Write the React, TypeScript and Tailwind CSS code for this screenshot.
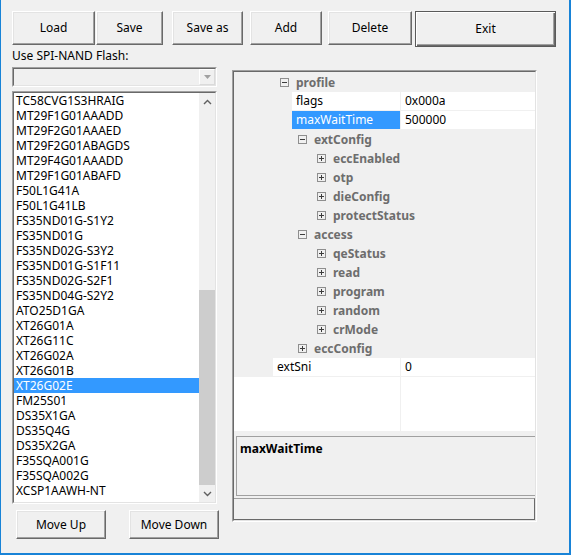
import React from 'react';

const CHIPS = [
  'TC58CVG1S3HRAIG',
  'MT29F1G01AAADD',
  'MT29F2G01AAAED',
  'MT29F2G01ABAGDS',
  'MT29F4G01AAADD',
  'MT29F1G01ABAFD',
  'F50L1G41A',
  'F50L1G41LB',
  'FS35ND01G-S1Y2',
  'FS35ND01G',
  'FS35ND02G-S3Y2',
  'FS35ND01G-S1F11',
  'FS35ND02G-S2F1',
  'FS35ND04G-S2Y2',
  'ATO25D1GA',
  'XT26G01A',
  'XT26G11C',
  'XT26G02A',
  'XT26G01B',
  'XT26G02E',
  'FM25S01',
  'DS35X1GA',
  'DS35Q4G',
  'DS35X2GA',
  'F35SQA001G',
  'F35SQA002G',
  'XCSP1AAWH-NT',
];

const SELECTED_CHIP = 'XT26G02E';

type GridRow =
  | { kind: 'cat'; label: string; open: boolean; indent: string }
  | { kind: 'prop'; name: string; value: string; spacer: string; selected?: boolean };

// indent / spacer classes written out in full so tailwind picks them up
const ROWS: GridRow[] = [
  { kind: 'cat', label: 'profile', open: true, indent: 'pl-[46px]' },
  { kind: 'prop', name: 'flags', value: '0x000a', spacer: 'w-[58px]' },
  { kind: 'prop', name: 'maxWaitTime', value: '500000', spacer: 'w-[58px]', selected: true },
  { kind: 'cat', label: 'extConfig', open: true, indent: 'pl-[64px]' },
  { kind: 'cat', label: 'eccEnabled', open: false, indent: 'pl-[83px]' },
  { kind: 'cat', label: 'otp', open: false, indent: 'pl-[83px]' },
  { kind: 'cat', label: 'dieConfig', open: false, indent: 'pl-[83px]' },
  { kind: 'cat', label: 'protectStatus', open: false, indent: 'pl-[83px]' },
  { kind: 'cat', label: 'access', open: true, indent: 'pl-[64px]' },
  { kind: 'cat', label: 'qeStatus', open: false, indent: 'pl-[83px]' },
  { kind: 'cat', label: 'read', open: false, indent: 'pl-[83px]' },
  { kind: 'cat', label: 'program', open: false, indent: 'pl-[83px]' },
  { kind: 'cat', label: 'random', open: false, indent: 'pl-[83px]' },
  { kind: 'cat', label: 'crMode', open: false, indent: 'pl-[83px]' },
  { kind: 'cat', label: 'eccConfig', open: false, indent: 'pl-[64px]' },
  { kind: 'prop', name: 'extSni', value: '0', spacer: 'w-[39px]' },
];

function WinButton({
  label,
  className = '',
  isDefault = false,
}: {
  label: string;
  className?: string;
  isDefault?: boolean;
}) {
  return (
    <button
      className={`flex shrink-0 items-center justify-center bg-[#f0f0f0] text-[12px] text-black ${
        isDefault
          ? 'border border-[#5a5a5a] shadow-[inset_1px_1px_0_#ffffff,inset_-1px_-1px_0_#696969,inset_-2px_-2px_0_#a0a0a0]'
          : 'border border-t-white border-l-white border-r-[#696969] border-b-[#696969] shadow-[inset_-1px_-1px_0_#a0a0a0,inset_1px_1px_0_#e3e3e3]'
      } ${className}`}
    >
      {label}
    </button>
  );
}

function Toggle({ open }: { open: boolean }) {
  return (
    <svg width="9" height="9" viewBox="0 0 9 9" className="shrink-0">
      <rect x="0.5" y="0.5" width="8" height="8" fill="none" stroke="#8e8e8e" />
      <line x1="2" y1="4.5" x2="7" y2="4.5" stroke="#3c3c3c" />
      {!open && <line x1="4.5" y1="2" x2="4.5" y2="7" stroke="#3c3c3c" />}
    </svg>
  );
}

function Chevron({ up }: { up: boolean }) {
  return (
    <svg width="9" height="6" viewBox="0 0 9 6">
      <path
        d={up ? 'M1 5 L4.5 1.5 L8 5' : 'M1 1 L4.5 4.5 L8 1'}
        fill="none"
        stroke="#606060"
        strokeWidth="1.4"
      />
    </svg>
  );
}

function ChipList() {
  return (
    <div className="mt-[4px] h-[413px] w-[205px] border border-t-[#a0a0a0] border-l-[#a0a0a0] border-r-white border-b-white">
      <div className="flex h-full border border-t-[#696969] border-l-[#696969] border-r-[#e3e3e3] border-b-[#e3e3e3] bg-white">
        <div className="flex-1 overflow-hidden">
          {CHIPS.map((c) => (
            <div
              key={c}
              className={`h-[15px] pl-[2px] text-[12px] leading-[15px] ${
                c === SELECTED_CHIP ? 'bg-[#3399ff] text-white' : 'text-black'
              }`}
            >
              {c}
            </div>
          ))}
        </div>
        {/* scrollbar */}
        <div className="flex w-[16px] flex-col bg-[#f0f0f0]">
          <div className="flex h-[17px] items-center justify-center">
            <Chevron up />
          </div>
          <div className="h-[180px]" />
          <div className="flex-1 bg-[#cdcdcd]" />
          <div className="flex h-[17px] items-center justify-center">
            <Chevron up={false} />
          </div>
        </div>
      </div>
    </div>
  );
}

function PropertyGrid() {
  return (
    <div className="ml-[15px] mt-[23px] h-[452px] w-[305px] border border-t-[#a0a0a0] border-l-[#a0a0a0] border-r-white border-b-white">
      <div className="flex h-full flex-col border border-t-[#696969] border-l-[#696969] border-r-[#e3e3e3] border-b-[#e3e3e3] bg-[#f0f0f0]">
        <div className="h-[1px]" />
        {ROWS.map((r) =>
          r.kind === 'cat' ? (
            <div key={r.label} className={`flex h-[19px] items-center ${r.indent}`}>
              <Toggle open={r.open} />
              <span className="ml-[7px] text-[12px] font-bold leading-[19px] text-[#6d6d6d]">
                {r.label}
              </span>
            </div>
          ) : (
            <div key={r.name} className="flex h-[19px] items-start">
              <div className={`h-[19px] shrink-0 ${r.spacer}`} />
              <div
                className={`h-[18px] flex-1 pl-[4px] text-[12px] leading-[18px] ${
                  r.selected ? 'bg-[#3399ff] text-white' : 'bg-white text-black'
                }`}
              >
                {r.name}
              </div>
              <div className="ml-[1px] h-[18px] w-[134px] shrink-0 bg-white pl-[4px] text-[12px] leading-[18px] text-black">
                {r.value}
              </div>
            </div>
          ),
        )}
        {/* empty rows area */}
        <div className="flex h-[54px] items-stretch">
          <div className="flex-1 bg-white" />
          <div className="ml-[1px] w-[134px] bg-white" />
        </div>
        {/* description */}
        <div className="h-[5px]" />
        <div className="ml-[2px] h-[60px] border border-r-0 border-[#a0a0a0] pl-[3px] pt-[4px] text-[12px] font-bold leading-[15px] text-black">
          maxWaitTime
        </div>
        <div className="h-[2px]" />
        <div className="h-[22px] border-t border-r border-b border-t-[#a0a0a0] border-r-[#696969] border-b-[#696969]" />
      </div>
    </div>
  );
}

export default function App() {
  return (
    <div className="h-[555px] w-[571px] overflow-hidden border-b-2 border-l border-r-2 border-[#1883d7] bg-[#f0f0f0] font-['Noto_Sans',sans-serif] text-black">
      {/* toolbar */}
      <div className="flex items-start pl-[11px] pt-[11px]">
        <WinButton label="Load" className="h-[34px] w-[83px]" />
        <WinButton label="Save" className="ml-[1px] h-[34px] w-[67px]" />
        <WinButton label="Save as" className="ml-[9px] h-[34px] w-[71px]" />
        <WinButton label="Add" className="ml-[7px] h-[34px] w-[72px]" />
        <WinButton label="Delete" className="ml-[6px] h-[34px] w-[84px]" />
        <WinButton label="Exit" className="ml-[3px] h-[36px] w-[141px]" isDefault />
      </div>

      <div className="flex items-start">
        {/* left column */}
        <div className="ml-[11px] w-[205px]">
          <div className="mt-[1px] h-[15px] text-[12px] leading-[15px]">Use SPI-NAND Flash:</div>
          <div className="mt-[4px] h-[20px] w-[205px] border border-t-[#a0a0a0] border-l-[#a0a0a0] border-r-white border-b-white">
            <div className="flex h-full justify-end border border-t-[#696969] border-l-[#696969] border-r-[#e3e3e3] border-b-[#e3e3e3] bg-[#f0f0f0]">
              <div className="flex w-[16px] items-center justify-center border border-t-white border-l-white border-r-[#dadada] border-b-[#dadada]">
                <svg width="7" height="4" viewBox="0 0 7 4">
                  <path d="M0 0 L7 0 L3.5 4 Z" fill="#a0a0a0" />
                </svg>
              </div>
            </div>
          </div>
          <ChipList />
          <div className="mt-[6px] flex">
            <WinButton label="Move Up" className="ml-[4px] h-[29px] w-[90px]" />
            <WinButton label="Move Down" className="ml-[23px] h-[29px] w-[90px]" />
          </div>
        </div>

        <PropertyGrid />
      </div>
    </div>
  );
}
